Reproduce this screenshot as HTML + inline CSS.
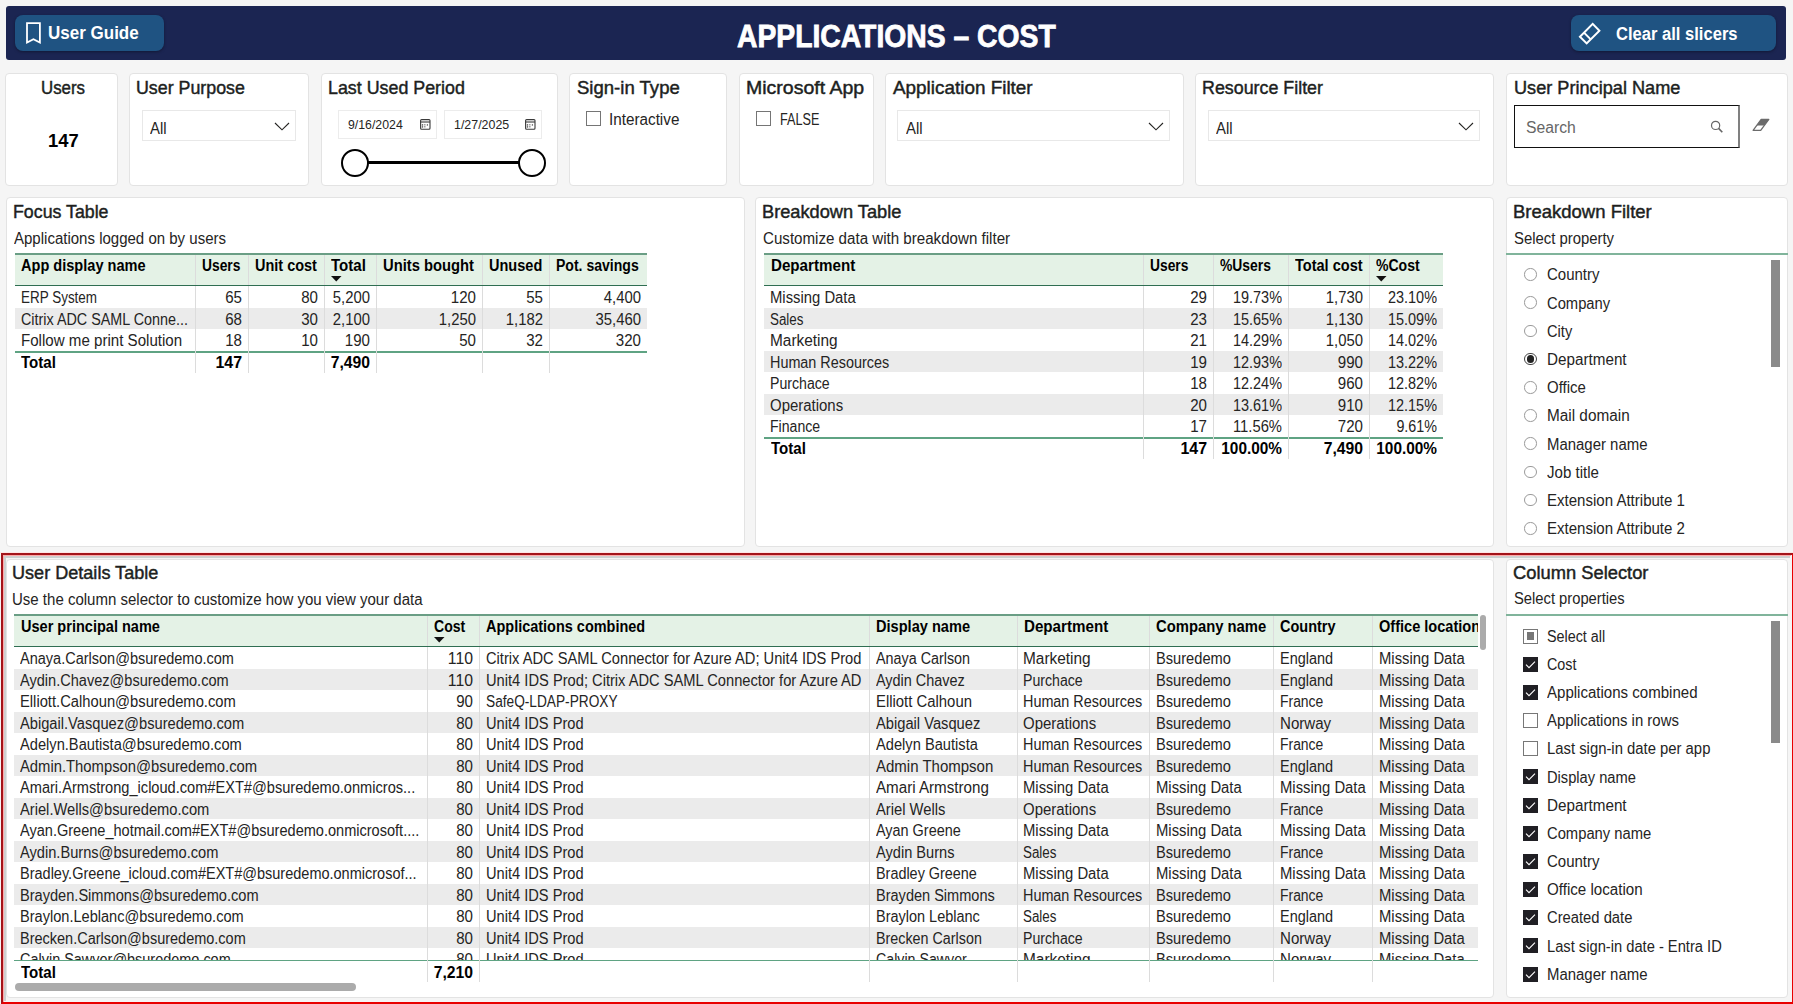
<!DOCTYPE html><html><head><meta charset="utf-8"><style>
html,body{margin:0;padding:0;}
body{width:1793px;height:1004px;position:relative;overflow:hidden;background:#f5f5f5;font-family:"Liberation Sans",sans-serif;}
.t{position:absolute;white-space:nowrap;}
</style></head><body>
<div style="position:absolute;left:6px;top:6px;width:1780px;height:54px;background:#1b2552;border-radius:3px;"></div>
<div style="position:absolute;left:15px;top:15px;width:149px;height:36px;background:#1f5382;border-radius:8px;box-shadow:0 1px 3px rgba(0,0,0,.35);"></div>
<div style="position:absolute;left:1571px;top:15px;width:205px;height:36px;background:#1f5382;border-radius:8px;box-shadow:0 1px 3px rgba(0,0,0,.35);"></div>
<svg style="position:absolute;left:24px;top:21px" width="20" height="25" viewBox="0 0 20 25"><path d="M3 2.2 H15.9 V21.6 L9.45 18.3 L3 21.6 Z" fill="none" stroke="#fff" stroke-width="1.8" stroke-linejoin="miter"/></svg>
<div class="t" style="left:47.99px;transform-origin:0 0;top:23.80px;font-size:18.67px;line-height:18.67px;font-weight:700;color:#fff;transform:scaleX(0.9112);">User Guide</div>
<div class="t" style="left:736.80px;transform-origin:0 0;top:20.98px;font-size:30.5px;line-height:30.5px;font-weight:700;color:#fff;transform:scaleX(0.9279);-webkit-text-stroke:0.8px #fff;">APPLICATIONS – COST</div>
<svg style="position:absolute;left:1576px;top:20px" width="27" height="27" viewBox="0 0 27 27"><g transform="rotate(-45 13.5 13.5)"><rect x="4.5" y="9" width="18" height="9.5" fill="none" stroke="#fff" stroke-width="2"/><line x1="10.2" y1="9" x2="10.2" y2="18.5" stroke="#fff" stroke-width="2"/></g></svg>
<div class="t" style="left:1616.23px;transform-origin:0 0;top:24.90px;font-size:18.67px;line-height:18.67px;font-weight:700;color:#fff;transform:scaleX(0.8878);">Clear all slicers</div>
<div style="position:absolute;left:5px;top:73px;width:113px;height:113px;background:#fff;border:1px solid #e3e3e3;box-sizing:border-box;border-radius:4px;"></div>
<div style="position:absolute;left:129px;top:73px;width:180px;height:113px;background:#fff;border:1px solid #e3e3e3;box-sizing:border-box;border-radius:4px;"></div>
<div style="position:absolute;left:321px;top:73px;width:237px;height:113px;background:#fff;border:1px solid #e3e3e3;box-sizing:border-box;border-radius:4px;"></div>
<div style="position:absolute;left:569px;top:73px;width:158px;height:113px;background:#fff;border:1px solid #e3e3e3;box-sizing:border-box;border-radius:4px;"></div>
<div style="position:absolute;left:739px;top:73px;width:135px;height:113px;background:#fff;border:1px solid #e3e3e3;box-sizing:border-box;border-radius:4px;"></div>
<div style="position:absolute;left:885px;top:73px;width:299px;height:113px;background:#fff;border:1px solid #e3e3e3;box-sizing:border-box;border-radius:4px;"></div>
<div style="position:absolute;left:1195px;top:73px;width:299px;height:113px;background:#fff;border:1px solid #e3e3e3;box-sizing:border-box;border-radius:4px;"></div>
<div style="position:absolute;left:1506px;top:73px;width:282px;height:113px;background:#fff;border:1px solid #e3e3e3;box-sizing:border-box;border-radius:4px;"></div>
<div class="t" style="left:41.17px;transform-origin:0 0;top:78.90px;font-size:18.67px;line-height:18.67px;font-weight:400;color:#201f1e;transform:scaleX(0.9043);-webkit-text-stroke:0.45px #201f1e;">Users</div>
<div class="t" style="left:47.72px;transform-origin:0 0;top:131.70px;font-size:18.67px;line-height:18.67px;font-weight:700;color:#000;transform:scaleX(0.9831);">147</div>
<div class="t" style="left:136.31px;transform-origin:0 0;top:79.00px;font-size:18.67px;line-height:18.67px;font-weight:400;color:#201f1e;transform:scaleX(0.9550);-webkit-text-stroke:0.45px #201f1e;">User Purpose</div>
<div class="t" style="left:328.37px;transform-origin:0 0;top:79.00px;font-size:18.67px;line-height:18.67px;font-weight:400;color:#201f1e;transform:scaleX(0.9559);-webkit-text-stroke:0.45px #201f1e;">Last Used Period</div>
<div class="t" style="left:576.75px;transform-origin:0 0;top:79.00px;font-size:18.67px;line-height:18.67px;font-weight:400;color:#201f1e;transform:scaleX(0.9941);-webkit-text-stroke:0.45px #201f1e;">Sign-in Type</div>
<div class="t" style="left:746.13px;transform-origin:0 0;top:79.00px;font-size:18.67px;line-height:18.67px;font-weight:400;color:#201f1e;transform:scaleX(1.0450);-webkit-text-stroke:0.45px #201f1e;">Microsoft App</div>
<div class="t" style="left:893.00px;transform-origin:0 0;top:79.00px;font-size:18.67px;line-height:18.67px;font-weight:400;color:#201f1e;transform:scaleX(1.0127);-webkit-text-stroke:0.45px #201f1e;">Application Filter</div>
<div class="t" style="left:1202.27px;transform-origin:0 0;top:79.00px;font-size:18.67px;line-height:18.67px;font-weight:400;color:#201f1e;transform:scaleX(0.9563);-webkit-text-stroke:0.45px #201f1e;">Resource Filter</div>
<div class="t" style="left:1513.58px;transform-origin:0 0;top:79.00px;font-size:18.67px;line-height:18.67px;font-weight:400;color:#201f1e;transform:scaleX(0.9725);-webkit-text-stroke:0.45px #201f1e;">User Principal Name</div>
<div style="position:absolute;left:142px;top:110px;width:154px;height:31px;border:1px solid #e8e8e8;box-sizing:border-box;background:#fff;"></div>
<div class="t" style="left:150.00px;transform-origin:0 0;top:120.66px;font-size:16px;line-height:16px;font-weight:400;color:#252423;transform:scaleX(0.9313);">All</div>
<svg style="position:absolute;left:274px;top:119px" width="16" height="12" viewBox="0 0 16 12"><path d="M1 4 L8 10.8 L15 4" fill="none" stroke="#252423" stroke-width="1.15"/></svg>
<div style="position:absolute;left:897px;top:110px;width:273px;height:31px;border:1px solid #e8e8e8;box-sizing:border-box;background:#fff;"></div>
<div class="t" style="left:905.50px;transform-origin:0 0;top:120.66px;font-size:16px;line-height:16px;font-weight:400;color:#252423;transform:scaleX(0.9313);">All</div>
<svg style="position:absolute;left:1148px;top:119px" width="16" height="12" viewBox="0 0 16 12"><path d="M1 4 L8 10.8 L15 4" fill="none" stroke="#252423" stroke-width="1.15"/></svg>
<div style="position:absolute;left:1208px;top:110px;width:272px;height:31px;border:1px solid #e8e8e8;box-sizing:border-box;background:#fff;"></div>
<div class="t" style="left:1215.80px;transform-origin:0 0;top:120.66px;font-size:16px;line-height:16px;font-weight:400;color:#252423;transform:scaleX(0.9313);">All</div>
<svg style="position:absolute;left:1458px;top:119px" width="16" height="12" viewBox="0 0 16 12"><path d="M1 4 L8 10.8 L15 4" fill="none" stroke="#252423" stroke-width="1.15"/></svg>
<div style="position:absolute;left:338px;top:110px;width:99px;height:29px;border:1px solid #ececec;box-sizing:border-box;background:#fff;"></div>
<div class="t" style="left:347.94px;transform-origin:0 0;top:118.42px;font-size:13.33px;line-height:13.33px;font-weight:400;color:#252423;transform:scaleX(0.9231);">9/16/2024</div>
<svg style="position:absolute;left:419.6px;top:118.5px" width="11" height="11" viewBox="0 0 11 11"><rect x="0.6" y="0.6" width="9.4" height="9.6" rx="1" fill="none" stroke="#3a3a3a" stroke-width="1.1"/><line x1="0.6" y1="3" x2="10" y2="3" stroke="#3a3a3a" stroke-width="1.1"/><circle cx="2.4" cy="5.9" r="0.7" fill="#222"/><rect x="3.8" y="5.4" width="1.8" height="0.9" fill="#666"/><circle cx="7.4" cy="5.9" r="0.7" fill="#333"/><circle cx="2.4" cy="7.9" r="0.7" fill="#222"/><rect x="3.8" y="7.4" width="1.8" height="0.9" fill="#666"/></svg>
<div style="position:absolute;left:444px;top:110px;width:98px;height:29px;border:1px solid #ececec;box-sizing:border-box;background:#fff;"></div>
<div class="t" style="left:453.57px;transform-origin:0 0;top:118.42px;font-size:13.33px;line-height:13.33px;font-weight:400;color:#252423;transform:scaleX(0.9310);">1/27/2025</div>
<svg style="position:absolute;left:524.5px;top:118.5px" width="11" height="11" viewBox="0 0 11 11"><rect x="0.6" y="0.6" width="9.4" height="9.6" rx="1" fill="none" stroke="#3a3a3a" stroke-width="1.1"/><line x1="0.6" y1="3" x2="10" y2="3" stroke="#3a3a3a" stroke-width="1.1"/><circle cx="2.4" cy="5.9" r="0.7" fill="#222"/><rect x="3.8" y="5.4" width="1.8" height="0.9" fill="#666"/><circle cx="7.4" cy="5.9" r="0.7" fill="#333"/><circle cx="2.4" cy="7.9" r="0.7" fill="#222"/><rect x="3.8" y="7.4" width="1.8" height="0.9" fill="#666"/></svg>
<div style="position:absolute;left:368px;top:161px;width:151px;height:3px;background:#000;"></div>
<div style="position:absolute;left:341.3px;top:148.8px;width:28.2px;height:28.2px;border:2.7px solid #000;box-sizing:border-box;border-radius:50%;background:#fff"></div>
<div style="position:absolute;left:518px;top:148.8px;width:28.2px;height:28.2px;border:2.7px solid #000;box-sizing:border-box;border-radius:50%;background:#fff"></div>
<div style="position:absolute;left:586px;top:111px;width:15px;height:15px;border:1px solid #757575;box-sizing:border-box;"></div>
<div class="t" style="left:608.57px;transform-origin:0 0;top:112.16px;font-size:16px;line-height:16px;font-weight:400;color:#252423;transform:scaleX(0.9533);">Interactive</div>
<div style="position:absolute;left:756px;top:111px;width:15px;height:15px;border:1px solid #757575;box-sizing:border-box;"></div>
<div class="t" style="left:779.61px;transform-origin:0 0;top:112.16px;font-size:16px;line-height:16px;font-weight:400;color:#252423;transform:scaleX(0.7896);">FALSE</div>
<div style="position:absolute;left:1514px;top:105px;width:226px;height:43px;border:1.2px solid #111;border-right:2px solid #808080;box-sizing:border-box;background:#fff;"></div>
<div class="t" style="left:1525.96px;transform-origin:0 0;top:119.76px;font-size:16px;line-height:16px;font-weight:400;color:#666;transform:scaleX(0.9837);">Search</div>
<svg style="position:absolute;left:1700px;top:110px" width="80" height="30" viewBox="1700 110 80 30"><circle cx="1715.6" cy="125.4" r="4.1" fill="none" stroke="#666" stroke-width="1.2"/><line x1="1718.6" y1="128.4" x2="1722.3" y2="132.3" stroke="#666" stroke-width="1.6"/><path d="M1761.2 119.4 L1768.8 119.4 L1764.2 125.6 L1756.6 125.6 Z" fill="#6b6b6b"/><path d="M1761.2 119.4 L1768.8 119.4 L1760.7 130.3 L1753.1 130.3 Z" fill="none" stroke="#6b6b6b" stroke-width="1.3" stroke-linejoin="round"/></svg>
<div style="position:absolute;left:6px;top:197px;width:739px;height:350px;background:#fff;border:1px solid #e3e3e3;box-sizing:border-box;border-radius:4px;"></div>
<div style="position:absolute;left:755px;top:197px;width:739px;height:350px;background:#fff;border:1px solid #e3e3e3;box-sizing:border-box;border-radius:4px;"></div>
<div style="position:absolute;left:1506px;top:197px;width:282px;height:350px;background:#fff;border:1px solid #e3e3e3;box-sizing:border-box;border-radius:4px;"></div>
<div class="t" style="left:12.97px;transform-origin:0 0;top:202.70px;font-size:18.67px;line-height:18.67px;font-weight:400;color:#201f1e;transform:scaleX(0.9527);-webkit-text-stroke:0.45px #201f1e;">Focus Table</div>
<div class="t" style="left:14.40px;transform-origin:0 0;top:231.16px;font-size:16px;line-height:16px;font-weight:400;color:#252423;transform:scaleX(0.9384);">Applications logged on by users</div>
<div class="t" style="left:762.44px;transform-origin:0 0;top:202.70px;font-size:18.67px;line-height:18.67px;font-weight:400;color:#201f1e;transform:scaleX(0.9762);-webkit-text-stroke:0.45px #201f1e;">Breakdown Table</div>
<div class="t" style="left:762.69px;transform-origin:0 0;top:231.16px;font-size:16px;line-height:16px;font-weight:400;color:#252423;transform:scaleX(0.9450);">Customize data with breakdown filter</div>
<div class="t" style="left:1512.81px;transform-origin:0 0;top:202.90px;font-size:18.67px;line-height:18.67px;font-weight:400;color:#201f1e;transform:scaleX(0.9910);-webkit-text-stroke:0.45px #201f1e;">Breakdown Filter</div>
<div class="t" style="left:1514.30px;transform-origin:0 0;top:230.76px;font-size:16px;line-height:16px;font-weight:400;color:#252423;transform:scaleX(0.9297);">Select property</div>
<div style="position:absolute;left:14.5px;top:253px;width:632.5px;height:33px;background:#e4f2e6;"></div>
<div style="position:absolute;left:14.5px;top:253px;width:632.5px;height:2px;background:#6a9e85;"></div>
<div style="position:absolute;left:14.5px;top:307.5px;width:632.5px;height:21.5px;background:#ebebeb"></div>
<div class="t" style="left:20.50px;transform-origin:0 0;top:290.16px;font-size:16px;line-height:16px;font-weight:400;color:#252423;transform:scaleX(0.8412);">ERP System</div>
<div class="t" style="left:-958.50px;width:1200px;text-align:right;transform-origin:100% 0;top:290.16px;font-size:16px;line-height:16px;font-weight:400;color:#252423;transform:scaleX(0.9422);">65</div>
<div class="t" style="left:-882.50px;width:1200px;text-align:right;transform-origin:100% 0;top:290.16px;font-size:16px;line-height:16px;font-weight:400;color:#252423;transform:scaleX(0.9422);">80</div>
<div class="t" style="left:-830.00px;width:1200px;text-align:right;transform-origin:100% 0;top:290.16px;font-size:16px;line-height:16px;font-weight:400;color:#252423;transform:scaleX(0.9288);">5,200</div>
<div class="t" style="left:-724.00px;width:1200px;text-align:right;transform-origin:100% 0;top:290.16px;font-size:16px;line-height:16px;font-weight:400;color:#252423;transform:scaleX(0.9422);">120</div>
<div class="t" style="left:-657.00px;width:1200px;text-align:right;transform-origin:100% 0;top:290.16px;font-size:16px;line-height:16px;font-weight:400;color:#252423;transform:scaleX(0.9422);">55</div>
<div class="t" style="left:-559.50px;width:1200px;text-align:right;transform-origin:100% 0;top:290.16px;font-size:16px;line-height:16px;font-weight:400;color:#252423;transform:scaleX(0.9288);">4,400</div>
<div class="t" style="left:20.50px;transform-origin:0 0;top:311.66px;font-size:16px;line-height:16px;font-weight:400;color:#252423;transform:scaleX(0.8971);">Citrix ADC SAML Conne...</div>
<div class="t" style="left:-958.50px;width:1200px;text-align:right;transform-origin:100% 0;top:311.66px;font-size:16px;line-height:16px;font-weight:400;color:#252423;transform:scaleX(0.9422);">68</div>
<div class="t" style="left:-882.50px;width:1200px;text-align:right;transform-origin:100% 0;top:311.66px;font-size:16px;line-height:16px;font-weight:400;color:#252423;transform:scaleX(0.9422);">30</div>
<div class="t" style="left:-830.00px;width:1200px;text-align:right;transform-origin:100% 0;top:311.66px;font-size:16px;line-height:16px;font-weight:400;color:#252423;transform:scaleX(0.9288);">2,100</div>
<div class="t" style="left:-724.00px;width:1200px;text-align:right;transform-origin:100% 0;top:311.66px;font-size:16px;line-height:16px;font-weight:400;color:#252423;transform:scaleX(0.9288);">1,250</div>
<div class="t" style="left:-657.00px;width:1200px;text-align:right;transform-origin:100% 0;top:311.66px;font-size:16px;line-height:16px;font-weight:400;color:#252423;transform:scaleX(0.9288);">1,182</div>
<div class="t" style="left:-559.50px;width:1200px;text-align:right;transform-origin:100% 0;top:311.66px;font-size:16px;line-height:16px;font-weight:400;color:#252423;transform:scaleX(0.9313);">35,460</div>
<div class="t" style="left:20.50px;transform-origin:0 0;top:333.16px;font-size:16px;line-height:16px;font-weight:400;color:#252423;transform:scaleX(0.9438);">Follow me print Solution</div>
<div class="t" style="left:-958.50px;width:1200px;text-align:right;transform-origin:100% 0;top:333.16px;font-size:16px;line-height:16px;font-weight:400;color:#252423;transform:scaleX(0.9422);">18</div>
<div class="t" style="left:-882.50px;width:1200px;text-align:right;transform-origin:100% 0;top:333.16px;font-size:16px;line-height:16px;font-weight:400;color:#252423;transform:scaleX(0.9422);">10</div>
<div class="t" style="left:-830.00px;width:1200px;text-align:right;transform-origin:100% 0;top:333.16px;font-size:16px;line-height:16px;font-weight:400;color:#252423;transform:scaleX(0.9422);">190</div>
<div class="t" style="left:-724.00px;width:1200px;text-align:right;transform-origin:100% 0;top:333.16px;font-size:16px;line-height:16px;font-weight:400;color:#252423;transform:scaleX(0.9422);">50</div>
<div class="t" style="left:-657.00px;width:1200px;text-align:right;transform-origin:100% 0;top:333.16px;font-size:16px;line-height:16px;font-weight:400;color:#252423;transform:scaleX(0.9422);">32</div>
<div class="t" style="left:-559.50px;width:1200px;text-align:right;transform-origin:100% 0;top:333.16px;font-size:16px;line-height:16px;font-weight:400;color:#252423;transform:scaleX(0.9422);">320</div>
<div style="position:absolute;left:14.5px;top:350.5px;width:632.5px;height:2.0px;background:#5fa383;"></div>
<div class="t" style="left:21.00px;transform-origin:0 0;top:354.66px;font-size:16px;line-height:16px;font-weight:700;color:#000;transform:scaleX(0.9413);">Total</div>
<div class="t" style="left:-958.50px;width:1200px;text-align:right;transform-origin:100% 0;top:354.66px;font-size:16px;line-height:16px;font-weight:700;color:#000;transform:scaleX(0.9964);">147</div>
<div class="t" style="left:-830.00px;width:1200px;text-align:right;transform-origin:100% 0;top:354.66px;font-size:16px;line-height:16px;font-weight:700;color:#000;transform:scaleX(0.9822);">7,490</div>
<div style="position:absolute;left:195.0px;top:255px;width:1px;height:117.5px;background:#dcdcdc"></div>
<div style="position:absolute;left:247.5px;top:255px;width:1px;height:117.5px;background:#dcdcdc"></div>
<div style="position:absolute;left:323.5px;top:255px;width:1px;height:117.5px;background:#dcdcdc"></div>
<div style="position:absolute;left:376.0px;top:255px;width:1px;height:117.5px;background:#dcdcdc"></div>
<div style="position:absolute;left:482.0px;top:255px;width:1px;height:117.5px;background:#dcdcdc"></div>
<div style="position:absolute;left:549.0px;top:255px;width:1px;height:117.5px;background:#dcdcdc"></div>
<div style="position:absolute;left:14.5px;top:285px;width:632.5px;height:1px;background:#2f6e52;"></div>
<div class="t" style="left:21.00px;transform-origin:0 0;top:257.66px;font-size:16px;line-height:16px;font-weight:700;color:#000;transform:scaleX(0.9095);">App display name</div>
<div class="t" style="left:202.00px;transform-origin:0 0;top:257.66px;font-size:16px;line-height:16px;font-weight:700;color:#000;transform:scaleX(0.8624);">Users</div>
<div class="t" style="left:254.50px;transform-origin:0 0;top:257.66px;font-size:16px;line-height:16px;font-weight:700;color:#000;transform:scaleX(0.9041);">Unit cost</div>
<div class="t" style="left:330.50px;transform-origin:0 0;top:257.66px;font-size:16px;line-height:16px;font-weight:700;color:#000;transform:scaleX(0.9413);">Total</div>
<div class="t" style="left:383.00px;transform-origin:0 0;top:257.66px;font-size:16px;line-height:16px;font-weight:700;color:#000;transform:scaleX(0.9225);">Units bought</div>
<div class="t" style="left:489.00px;transform-origin:0 0;top:257.66px;font-size:16px;line-height:16px;font-weight:700;color:#000;transform:scaleX(0.9075);">Unused</div>
<div class="t" style="left:556.00px;transform-origin:0 0;top:257.66px;font-size:16px;line-height:16px;font-weight:700;color:#000;transform:scaleX(0.8775);">Pot. savings</div>
<svg style="position:absolute;left:330.5px;top:276px" width="11" height="6" viewBox="0 0 11 6"><path d="M0 0 H10.5 L5.25 5.5 Z" fill="#111"/></svg>
<div style="position:absolute;left:764px;top:253px;width:679px;height:33px;background:#e4f2e6;"></div>
<div style="position:absolute;left:764px;top:253px;width:679px;height:2px;background:#6a9e85;"></div>
<div style="position:absolute;left:764px;top:307.5px;width:679px;height:21.5px;background:#ebebeb"></div>
<div style="position:absolute;left:764px;top:350.5px;width:679px;height:21.5px;background:#ebebeb"></div>
<div style="position:absolute;left:764px;top:393.5px;width:679px;height:21.5px;background:#ebebeb"></div>
<div class="t" style="left:770.00px;transform-origin:0 0;top:290.16px;font-size:16px;line-height:16px;font-weight:400;color:#252423;transform:scaleX(0.9272);">Missing Data</div>
<div class="t" style="left:7.00px;width:1200px;text-align:right;transform-origin:100% 0;top:290.16px;font-size:16px;line-height:16px;font-weight:400;color:#252423;transform:scaleX(0.9422);">29</div>
<div class="t" style="left:81.50px;width:1200px;text-align:right;transform-origin:100% 0;top:290.16px;font-size:16px;line-height:16px;font-weight:400;color:#252423;transform:scaleX(0.9029);">19.73%</div>
<div class="t" style="left:163.00px;width:1200px;text-align:right;transform-origin:100% 0;top:290.16px;font-size:16px;line-height:16px;font-weight:400;color:#252423;transform:scaleX(0.9288);">1,730</div>
<div class="t" style="left:236.50px;width:1200px;text-align:right;transform-origin:100% 0;top:290.16px;font-size:16px;line-height:16px;font-weight:400;color:#252423;transform:scaleX(0.9029);">23.10%</div>
<div class="t" style="left:770.00px;transform-origin:0 0;top:311.66px;font-size:16px;line-height:16px;font-weight:400;color:#252423;transform:scaleX(0.8367);">Sales</div>
<div class="t" style="left:7.00px;width:1200px;text-align:right;transform-origin:100% 0;top:311.66px;font-size:16px;line-height:16px;font-weight:400;color:#252423;transform:scaleX(0.9422);">23</div>
<div class="t" style="left:81.50px;width:1200px;text-align:right;transform-origin:100% 0;top:311.66px;font-size:16px;line-height:16px;font-weight:400;color:#252423;transform:scaleX(0.9029);">15.65%</div>
<div class="t" style="left:163.00px;width:1200px;text-align:right;transform-origin:100% 0;top:311.66px;font-size:16px;line-height:16px;font-weight:400;color:#252423;transform:scaleX(0.9288);">1,130</div>
<div class="t" style="left:236.50px;width:1200px;text-align:right;transform-origin:100% 0;top:311.66px;font-size:16px;line-height:16px;font-weight:400;color:#252423;transform:scaleX(0.9029);">15.09%</div>
<div class="t" style="left:770.00px;transform-origin:0 0;top:333.16px;font-size:16px;line-height:16px;font-weight:400;color:#252423;transform:scaleX(0.9633);">Marketing</div>
<div class="t" style="left:7.00px;width:1200px;text-align:right;transform-origin:100% 0;top:333.16px;font-size:16px;line-height:16px;font-weight:400;color:#252423;transform:scaleX(0.9422);">21</div>
<div class="t" style="left:81.50px;width:1200px;text-align:right;transform-origin:100% 0;top:333.16px;font-size:16px;line-height:16px;font-weight:400;color:#252423;transform:scaleX(0.9029);">14.29%</div>
<div class="t" style="left:163.00px;width:1200px;text-align:right;transform-origin:100% 0;top:333.16px;font-size:16px;line-height:16px;font-weight:400;color:#252423;transform:scaleX(0.9288);">1,050</div>
<div class="t" style="left:236.50px;width:1200px;text-align:right;transform-origin:100% 0;top:333.16px;font-size:16px;line-height:16px;font-weight:400;color:#252423;transform:scaleX(0.9029);">14.02%</div>
<div class="t" style="left:770.00px;transform-origin:0 0;top:354.66px;font-size:16px;line-height:16px;font-weight:400;color:#252423;transform:scaleX(0.8991);">Human Resources</div>
<div class="t" style="left:7.00px;width:1200px;text-align:right;transform-origin:100% 0;top:354.66px;font-size:16px;line-height:16px;font-weight:400;color:#252423;transform:scaleX(0.9422);">19</div>
<div class="t" style="left:81.50px;width:1200px;text-align:right;transform-origin:100% 0;top:354.66px;font-size:16px;line-height:16px;font-weight:400;color:#252423;transform:scaleX(0.9029);">12.93%</div>
<div class="t" style="left:163.00px;width:1200px;text-align:right;transform-origin:100% 0;top:354.66px;font-size:16px;line-height:16px;font-weight:400;color:#252423;transform:scaleX(0.9422);">990</div>
<div class="t" style="left:236.50px;width:1200px;text-align:right;transform-origin:100% 0;top:354.66px;font-size:16px;line-height:16px;font-weight:400;color:#252423;transform:scaleX(0.9029);">13.22%</div>
<div class="t" style="left:770.00px;transform-origin:0 0;top:376.16px;font-size:16px;line-height:16px;font-weight:400;color:#252423;transform:scaleX(0.8825);">Purchace</div>
<div class="t" style="left:7.00px;width:1200px;text-align:right;transform-origin:100% 0;top:376.16px;font-size:16px;line-height:16px;font-weight:400;color:#252423;transform:scaleX(0.9422);">18</div>
<div class="t" style="left:81.50px;width:1200px;text-align:right;transform-origin:100% 0;top:376.16px;font-size:16px;line-height:16px;font-weight:400;color:#252423;transform:scaleX(0.9029);">12.24%</div>
<div class="t" style="left:163.00px;width:1200px;text-align:right;transform-origin:100% 0;top:376.16px;font-size:16px;line-height:16px;font-weight:400;color:#252423;transform:scaleX(0.9422);">960</div>
<div class="t" style="left:236.50px;width:1200px;text-align:right;transform-origin:100% 0;top:376.16px;font-size:16px;line-height:16px;font-weight:400;color:#252423;transform:scaleX(0.9029);">12.82%</div>
<div class="t" style="left:770.00px;transform-origin:0 0;top:397.66px;font-size:16px;line-height:16px;font-weight:400;color:#252423;transform:scaleX(0.9347);">Operations</div>
<div class="t" style="left:7.00px;width:1200px;text-align:right;transform-origin:100% 0;top:397.66px;font-size:16px;line-height:16px;font-weight:400;color:#252423;transform:scaleX(0.9422);">20</div>
<div class="t" style="left:81.50px;width:1200px;text-align:right;transform-origin:100% 0;top:397.66px;font-size:16px;line-height:16px;font-weight:400;color:#252423;transform:scaleX(0.9029);">13.61%</div>
<div class="t" style="left:163.00px;width:1200px;text-align:right;transform-origin:100% 0;top:397.66px;font-size:16px;line-height:16px;font-weight:400;color:#252423;transform:scaleX(0.9422);">910</div>
<div class="t" style="left:236.50px;width:1200px;text-align:right;transform-origin:100% 0;top:397.66px;font-size:16px;line-height:16px;font-weight:400;color:#252423;transform:scaleX(0.9029);">12.15%</div>
<div class="t" style="left:770.00px;transform-origin:0 0;top:419.16px;font-size:16px;line-height:16px;font-weight:400;color:#252423;transform:scaleX(0.8804);">Finance</div>
<div class="t" style="left:7.00px;width:1200px;text-align:right;transform-origin:100% 0;top:419.16px;font-size:16px;line-height:16px;font-weight:400;color:#252423;transform:scaleX(0.9422);">17</div>
<div class="t" style="left:81.50px;width:1200px;text-align:right;transform-origin:100% 0;top:419.16px;font-size:16px;line-height:16px;font-weight:400;color:#252423;transform:scaleX(0.9231);">11.56%</div>
<div class="t" style="left:163.00px;width:1200px;text-align:right;transform-origin:100% 0;top:419.16px;font-size:16px;line-height:16px;font-weight:400;color:#252423;transform:scaleX(0.9422);">720</div>
<div class="t" style="left:236.50px;width:1200px;text-align:right;transform-origin:100% 0;top:419.16px;font-size:16px;line-height:16px;font-weight:400;color:#252423;transform:scaleX(0.8952);">9.61%</div>
<div style="position:absolute;left:764px;top:436.5px;width:679px;height:2.0px;background:#5fa383;"></div>
<div class="t" style="left:770.50px;transform-origin:0 0;top:440.66px;font-size:16px;line-height:16px;font-weight:700;color:#000;transform:scaleX(0.9413);">Total</div>
<div class="t" style="left:7.00px;width:1200px;text-align:right;transform-origin:100% 0;top:440.66px;font-size:16px;line-height:16px;font-weight:700;color:#000;transform:scaleX(0.9964);">147</div>
<div class="t" style="left:81.50px;width:1200px;text-align:right;transform-origin:100% 0;top:440.66px;font-size:16px;line-height:16px;font-weight:700;color:#000;transform:scaleX(0.9607);">100.00%</div>
<div class="t" style="left:163.00px;width:1200px;text-align:right;transform-origin:100% 0;top:440.66px;font-size:16px;line-height:16px;font-weight:700;color:#000;transform:scaleX(0.9822);">7,490</div>
<div class="t" style="left:236.50px;width:1200px;text-align:right;transform-origin:100% 0;top:440.66px;font-size:16px;line-height:16px;font-weight:700;color:#000;transform:scaleX(0.9607);">100.00%</div>
<div style="position:absolute;left:1143.0px;top:255px;width:1px;height:203.5px;background:#dcdcdc"></div>
<div style="position:absolute;left:1213.0px;top:255px;width:1px;height:203.5px;background:#dcdcdc"></div>
<div style="position:absolute;left:1287.5px;top:255px;width:1px;height:203.5px;background:#dcdcdc"></div>
<div style="position:absolute;left:1369.0px;top:255px;width:1px;height:203.5px;background:#dcdcdc"></div>
<div style="position:absolute;left:764px;top:285px;width:679px;height:1px;background:#2f6e52;"></div>
<div class="t" style="left:770.50px;transform-origin:0 0;top:257.66px;font-size:16px;line-height:16px;font-weight:700;color:#000;transform:scaleX(0.9468);">Department</div>
<div class="t" style="left:1150.00px;transform-origin:0 0;top:257.66px;font-size:16px;line-height:16px;font-weight:700;color:#000;transform:scaleX(0.8624);">Users</div>
<div class="t" style="left:1220.00px;transform-origin:0 0;top:257.66px;font-size:16px;line-height:16px;font-weight:700;color:#000;transform:scaleX(0.8661);">%Users</div>
<div class="t" style="left:1294.50px;transform-origin:0 0;top:257.66px;font-size:16px;line-height:16px;font-weight:700;color:#000;transform:scaleX(0.9090);">Total cost</div>
<div class="t" style="left:1376.00px;transform-origin:0 0;top:257.66px;font-size:16px;line-height:16px;font-weight:700;color:#000;transform:scaleX(0.8773);">%Cost</div>
<svg style="position:absolute;left:1376.0px;top:276px" width="11" height="6" viewBox="0 0 11 6"><path d="M0 0 H10.5 L5.25 5.5 Z" fill="#111"/></svg>
<div style="position:absolute;left:1506px;top:253px;width:282px;height:2px;background:#80b49b;"></div>
<div style="position:absolute;left:1524.3px;top:268.2px;width:12.5px;height:12.5px;border:1px solid #9a9a9a;box-sizing:border-box;border-radius:50%;background:#fff"></div>
<div class="t" style="left:1547.10px;transform-origin:0 0;top:267.46px;font-size:16px;line-height:16px;font-weight:400;color:#252423;transform:scaleX(0.9375);">Country</div>
<div style="position:absolute;left:1524.3px;top:296.4px;width:12.5px;height:12.5px;border:1px solid #9a9a9a;box-sizing:border-box;border-radius:50%;background:#fff"></div>
<div class="t" style="left:1547.10px;transform-origin:0 0;top:295.66px;font-size:16px;line-height:16px;font-weight:400;color:#252423;transform:scaleX(0.9222);">Company</div>
<div style="position:absolute;left:1524.3px;top:324.59999999999997px;width:12.5px;height:12.5px;border:1px solid #9a9a9a;box-sizing:border-box;border-radius:50%;background:#fff"></div>
<div class="t" style="left:1547.10px;transform-origin:0 0;top:323.86px;font-size:16px;line-height:16px;font-weight:400;color:#252423;transform:scaleX(0.9144);">City</div>
<div style="position:absolute;left:1524.3px;top:352.79999999999995px;width:12.5px;height:12.5px;border:1px solid #444;box-sizing:border-box;border-radius:50%;background:#fff"></div>
<div style="position:absolute;left:1526.8px;top:355.29999999999995px;width:7.5px;height:7.5px;border-radius:50%;background:#222"></div>
<div class="t" style="left:1547.10px;transform-origin:0 0;top:352.06px;font-size:16px;line-height:16px;font-weight:400;color:#252423;transform:scaleX(0.9522);">Department</div>
<div style="position:absolute;left:1524.3px;top:381.0px;width:12.5px;height:12.5px;border:1px solid #9a9a9a;box-sizing:border-box;border-radius:50%;background:#fff"></div>
<div class="t" style="left:1547.10px;transform-origin:0 0;top:380.26px;font-size:16px;line-height:16px;font-weight:400;color:#252423;transform:scaleX(0.9357);">Office</div>
<div style="position:absolute;left:1524.3px;top:409.2px;width:12.5px;height:12.5px;border:1px solid #9a9a9a;box-sizing:border-box;border-radius:50%;background:#fff"></div>
<div class="t" style="left:1547.10px;transform-origin:0 0;top:408.46px;font-size:16px;line-height:16px;font-weight:400;color:#252423;transform:scaleX(0.9583);">Mail domain</div>
<div style="position:absolute;left:1524.3px;top:437.4px;width:12.5px;height:12.5px;border:1px solid #9a9a9a;box-sizing:border-box;border-radius:50%;background:#fff"></div>
<div class="t" style="left:1547.10px;transform-origin:0 0;top:436.66px;font-size:16px;line-height:16px;font-weight:400;color:#252423;transform:scaleX(0.9334);">Manager name</div>
<div style="position:absolute;left:1524.3px;top:465.6px;width:12.5px;height:12.5px;border:1px solid #9a9a9a;box-sizing:border-box;border-radius:50%;background:#fff"></div>
<div class="t" style="left:1547.10px;transform-origin:0 0;top:464.86px;font-size:16px;line-height:16px;font-weight:400;color:#252423;transform:scaleX(0.9417);">Job title</div>
<div style="position:absolute;left:1524.3px;top:493.79999999999995px;width:12.5px;height:12.5px;border:1px solid #9a9a9a;box-sizing:border-box;border-radius:50%;background:#fff"></div>
<div class="t" style="left:1547.10px;transform-origin:0 0;top:493.06px;font-size:16px;line-height:16px;font-weight:400;color:#252423;transform:scaleX(0.9400);">Extension Attribute 1</div>
<div style="position:absolute;left:1524.3px;top:522.0px;width:12.5px;height:12.5px;border:1px solid #9a9a9a;box-sizing:border-box;border-radius:50%;background:#fff"></div>
<div class="t" style="left:1547.10px;transform-origin:0 0;top:521.26px;font-size:16px;line-height:16px;font-weight:400;color:#252423;transform:scaleX(0.9400);">Extension Attribute 2</div>
<div style="position:absolute;left:1771px;top:260px;width:9px;height:107px;background:#8a8a8a;"></div>
<div style="position:absolute;left:6px;top:559px;width:1488px;height:439px;background:#fff;border:1px solid #e3e3e3;box-sizing:border-box;border-radius:4px;"></div>
<div style="position:absolute;left:1506px;top:559px;width:282px;height:439px;background:#fff;border:1px solid #e3e3e3;box-sizing:border-box;border-radius:4px;"></div>
<div class="t" style="left:12.19px;transform-origin:0 0;top:563.90px;font-size:18.67px;line-height:18.67px;font-weight:400;color:#201f1e;transform:scaleX(0.9688);-webkit-text-stroke:0.45px #201f1e;">User Details Table</div>
<div class="t" style="left:12.23px;transform-origin:0 0;top:592.16px;font-size:16px;line-height:16px;font-weight:400;color:#252423;transform:scaleX(0.9384);">Use the column selector to customize how you view your data</div>
<div class="t" style="left:1513.02px;transform-origin:0 0;top:564.30px;font-size:18.67px;line-height:18.67px;font-weight:400;color:#201f1e;transform:scaleX(0.9821);-webkit-text-stroke:0.45px #201f1e;">Column Selector</div>
<div class="t" style="left:1514.00px;transform-origin:0 0;top:591.46px;font-size:16px;line-height:16px;font-weight:400;color:#252423;transform:scaleX(0.9217);">Select properties</div>
<div style="position:absolute;left:1506px;top:614px;width:282px;height:2px;background:#80b49b;"></div>
<div style="position:absolute;left:0;top:0;width:1478px;height:1004px;overflow:hidden">
<div style="position:absolute;left:14px;top:614px;width:1464px;height:33px;background:#e4f2e6;"></div>
<div style="position:absolute;left:14px;top:614px;width:1464px;height:2px;background:#6a9e85;"></div>
<div style="position:absolute;left:14px;top:668.5px;width:1464px;height:21.5px;background:#ebebeb"></div>
<div style="position:absolute;left:14px;top:711.5px;width:1464px;height:21.5px;background:#ebebeb"></div>
<div style="position:absolute;left:14px;top:754.5px;width:1464px;height:21.5px;background:#ebebeb"></div>
<div style="position:absolute;left:14px;top:797.5px;width:1464px;height:21.5px;background:#ebebeb"></div>
<div style="position:absolute;left:14px;top:840.5px;width:1464px;height:21.5px;background:#ebebeb"></div>
<div style="position:absolute;left:14px;top:883.5px;width:1464px;height:21.5px;background:#ebebeb"></div>
<div style="position:absolute;left:14px;top:926.5px;width:1464px;height:21.5px;background:#ebebeb"></div>
<div style="position:absolute;left:0;top:647px;width:1793px;height:313px;overflow:hidden">
<div class="t" style="left:20.00px;transform-origin:0 0;top:4.16px;font-size:16px;line-height:16px;font-weight:400;color:#252423;transform:scaleX(0.9069);">Anaya.Carlson@bsuredemo.com</div>
<div class="t" style="left:-727.00px;width:1200px;text-align:right;transform-origin:100% 0;top:4.16px;font-size:16px;line-height:16px;font-weight:400;color:#252423;transform:scaleX(0.9860);">110</div>
<div class="t" style="left:485.50px;transform-origin:0 0;top:4.16px;font-size:16px;line-height:16px;font-weight:400;color:#252423;transform:scaleX(0.9172);">Citrix ADC SAML Connector for Azure AD; Unit4 IDS Prod</div>
<div class="t" style="left:875.50px;transform-origin:0 0;top:4.16px;font-size:16px;line-height:16px;font-weight:400;color:#252423;transform:scaleX(0.8964);">Anaya Carlson</div>
<div class="t" style="left:1023.00px;transform-origin:0 0;top:4.16px;font-size:16px;line-height:16px;font-weight:400;color:#252423;transform:scaleX(0.9633);">Marketing</div>
<div class="t" style="left:1155.50px;transform-origin:0 0;top:4.16px;font-size:16px;line-height:16px;font-weight:400;color:#252423;transform:scaleX(0.9148);">Bsuredemo</div>
<div class="t" style="left:1279.50px;transform-origin:0 0;top:4.16px;font-size:16px;line-height:16px;font-weight:400;color:#252423;transform:scaleX(0.9046);">England</div>
<div class="t" style="left:1378.50px;transform-origin:0 0;top:4.16px;font-size:16px;line-height:16px;font-weight:400;color:#252423;transform:scaleX(0.9272);">Missing Data</div>
<div class="t" style="left:20.00px;transform-origin:0 0;top:25.66px;font-size:16px;line-height:16px;font-weight:400;color:#252423;transform:scaleX(0.9096);">Aydin.Chavez@bsuredemo.com</div>
<div class="t" style="left:-727.00px;width:1200px;text-align:right;transform-origin:100% 0;top:25.66px;font-size:16px;line-height:16px;font-weight:400;color:#252423;transform:scaleX(0.9860);">110</div>
<div class="t" style="left:485.50px;transform-origin:0 0;top:25.66px;font-size:16px;line-height:16px;font-weight:400;color:#252423;transform:scaleX(0.9172);">Unit4 IDS Prod; Citrix ADC SAML Connector for Azure AD</div>
<div class="t" style="left:875.50px;transform-origin:0 0;top:25.66px;font-size:16px;line-height:16px;font-weight:400;color:#252423;transform:scaleX(0.9020);">Aydin Chavez</div>
<div class="t" style="left:1023.00px;transform-origin:0 0;top:25.66px;font-size:16px;line-height:16px;font-weight:400;color:#252423;transform:scaleX(0.8825);">Purchace</div>
<div class="t" style="left:1155.50px;transform-origin:0 0;top:25.66px;font-size:16px;line-height:16px;font-weight:400;color:#252423;transform:scaleX(0.9148);">Bsuredemo</div>
<div class="t" style="left:1279.50px;transform-origin:0 0;top:25.66px;font-size:16px;line-height:16px;font-weight:400;color:#252423;transform:scaleX(0.9046);">England</div>
<div class="t" style="left:1378.50px;transform-origin:0 0;top:25.66px;font-size:16px;line-height:16px;font-weight:400;color:#252423;transform:scaleX(0.9272);">Missing Data</div>
<div class="t" style="left:20.00px;transform-origin:0 0;top:47.16px;font-size:16px;line-height:16px;font-weight:400;color:#252423;transform:scaleX(0.9218);">Elliott.Calhoun@bsuredemo.com</div>
<div class="t" style="left:-727.00px;width:1200px;text-align:right;transform-origin:100% 0;top:47.16px;font-size:16px;line-height:16px;font-weight:400;color:#252423;transform:scaleX(0.9422);">90</div>
<div class="t" style="left:485.50px;transform-origin:0 0;top:47.16px;font-size:16px;line-height:16px;font-weight:400;color:#252423;transform:scaleX(0.8553);">SafeQ-LDAP-PROXY</div>
<div class="t" style="left:875.50px;transform-origin:0 0;top:47.16px;font-size:16px;line-height:16px;font-weight:400;color:#252423;transform:scaleX(0.9300);">Elliott Calhoun</div>
<div class="t" style="left:1023.00px;transform-origin:0 0;top:47.16px;font-size:16px;line-height:16px;font-weight:400;color:#252423;transform:scaleX(0.8991);">Human Resources</div>
<div class="t" style="left:1155.50px;transform-origin:0 0;top:47.16px;font-size:16px;line-height:16px;font-weight:400;color:#252423;transform:scaleX(0.9148);">Bsuredemo</div>
<div class="t" style="left:1279.50px;transform-origin:0 0;top:47.16px;font-size:16px;line-height:16px;font-weight:400;color:#252423;transform:scaleX(0.8692);">France</div>
<div class="t" style="left:1378.50px;transform-origin:0 0;top:47.16px;font-size:16px;line-height:16px;font-weight:400;color:#252423;transform:scaleX(0.9272);">Missing Data</div>
<div class="t" style="left:20.00px;transform-origin:0 0;top:68.66px;font-size:16px;line-height:16px;font-weight:400;color:#252423;transform:scaleX(0.9167);">Abigail.Vasquez@bsuredemo.com</div>
<div class="t" style="left:-727.00px;width:1200px;text-align:right;transform-origin:100% 0;top:68.66px;font-size:16px;line-height:16px;font-weight:400;color:#252423;transform:scaleX(0.9422);">80</div>
<div class="t" style="left:485.50px;transform-origin:0 0;top:68.66px;font-size:16px;line-height:16px;font-weight:400;color:#252423;transform:scaleX(0.9144);">Unit4 IDS Prod</div>
<div class="t" style="left:875.50px;transform-origin:0 0;top:68.66px;font-size:16px;line-height:16px;font-weight:400;color:#252423;transform:scaleX(0.9182);">Abigail Vasquez</div>
<div class="t" style="left:1023.00px;transform-origin:0 0;top:68.66px;font-size:16px;line-height:16px;font-weight:400;color:#252423;transform:scaleX(0.9347);">Operations</div>
<div class="t" style="left:1155.50px;transform-origin:0 0;top:68.66px;font-size:16px;line-height:16px;font-weight:400;color:#252423;transform:scaleX(0.9148);">Bsuredemo</div>
<div class="t" style="left:1279.50px;transform-origin:0 0;top:68.66px;font-size:16px;line-height:16px;font-weight:400;color:#252423;transform:scaleX(0.9420);">Norway</div>
<div class="t" style="left:1378.50px;transform-origin:0 0;top:68.66px;font-size:16px;line-height:16px;font-weight:400;color:#252423;transform:scaleX(0.9272);">Missing Data</div>
<div class="t" style="left:20.00px;transform-origin:0 0;top:90.16px;font-size:16px;line-height:16px;font-weight:400;color:#252423;transform:scaleX(0.9158);">Adelyn.Bautista@bsuredemo.com</div>
<div class="t" style="left:-727.00px;width:1200px;text-align:right;transform-origin:100% 0;top:90.16px;font-size:16px;line-height:16px;font-weight:400;color:#252423;transform:scaleX(0.9422);">80</div>
<div class="t" style="left:485.50px;transform-origin:0 0;top:90.16px;font-size:16px;line-height:16px;font-weight:400;color:#252423;transform:scaleX(0.9144);">Unit4 IDS Prod</div>
<div class="t" style="left:875.50px;transform-origin:0 0;top:90.16px;font-size:16px;line-height:16px;font-weight:400;color:#252423;transform:scaleX(0.9163);">Adelyn Bautista</div>
<div class="t" style="left:1023.00px;transform-origin:0 0;top:90.16px;font-size:16px;line-height:16px;font-weight:400;color:#252423;transform:scaleX(0.8991);">Human Resources</div>
<div class="t" style="left:1155.50px;transform-origin:0 0;top:90.16px;font-size:16px;line-height:16px;font-weight:400;color:#252423;transform:scaleX(0.9148);">Bsuredemo</div>
<div class="t" style="left:1279.50px;transform-origin:0 0;top:90.16px;font-size:16px;line-height:16px;font-weight:400;color:#252423;transform:scaleX(0.8692);">France</div>
<div class="t" style="left:1378.50px;transform-origin:0 0;top:90.16px;font-size:16px;line-height:16px;font-weight:400;color:#252423;transform:scaleX(0.9272);">Missing Data</div>
<div class="t" style="left:20.00px;transform-origin:0 0;top:111.66px;font-size:16px;line-height:16px;font-weight:400;color:#252423;transform:scaleX(0.9251);">Admin.Thompson@bsuredemo.com</div>
<div class="t" style="left:-727.00px;width:1200px;text-align:right;transform-origin:100% 0;top:111.66px;font-size:16px;line-height:16px;font-weight:400;color:#252423;transform:scaleX(0.9422);">80</div>
<div class="t" style="left:485.50px;transform-origin:0 0;top:111.66px;font-size:16px;line-height:16px;font-weight:400;color:#252423;transform:scaleX(0.9144);">Unit4 IDS Prod</div>
<div class="t" style="left:875.50px;transform-origin:0 0;top:111.66px;font-size:16px;line-height:16px;font-weight:400;color:#252423;transform:scaleX(0.9373);">Admin Thompson</div>
<div class="t" style="left:1023.00px;transform-origin:0 0;top:111.66px;font-size:16px;line-height:16px;font-weight:400;color:#252423;transform:scaleX(0.8991);">Human Resources</div>
<div class="t" style="left:1155.50px;transform-origin:0 0;top:111.66px;font-size:16px;line-height:16px;font-weight:400;color:#252423;transform:scaleX(0.9148);">Bsuredemo</div>
<div class="t" style="left:1279.50px;transform-origin:0 0;top:111.66px;font-size:16px;line-height:16px;font-weight:400;color:#252423;transform:scaleX(0.9046);">England</div>
<div class="t" style="left:1378.50px;transform-origin:0 0;top:111.66px;font-size:16px;line-height:16px;font-weight:400;color:#252423;transform:scaleX(0.9272);">Missing Data</div>
<div class="t" style="left:20.00px;transform-origin:0 0;top:133.16px;font-size:16px;line-height:16px;font-weight:400;color:#252423;transform:scaleX(0.9121);">Amari.Armstrong_icloud.com#EXT#@bsuredemo.onmicros...</div>
<div class="t" style="left:-727.00px;width:1200px;text-align:right;transform-origin:100% 0;top:133.16px;font-size:16px;line-height:16px;font-weight:400;color:#252423;transform:scaleX(0.9422);">80</div>
<div class="t" style="left:485.50px;transform-origin:0 0;top:133.16px;font-size:16px;line-height:16px;font-weight:400;color:#252423;transform:scaleX(0.9144);">Unit4 IDS Prod</div>
<div class="t" style="left:875.50px;transform-origin:0 0;top:133.16px;font-size:16px;line-height:16px;font-weight:400;color:#252423;transform:scaleX(0.9473);">Amari Armstrong</div>
<div class="t" style="left:1023.00px;transform-origin:0 0;top:133.16px;font-size:16px;line-height:16px;font-weight:400;color:#252423;transform:scaleX(0.9272);">Missing Data</div>
<div class="t" style="left:1155.50px;transform-origin:0 0;top:133.16px;font-size:16px;line-height:16px;font-weight:400;color:#252423;transform:scaleX(0.9272);">Missing Data</div>
<div class="t" style="left:1279.50px;transform-origin:0 0;top:133.16px;font-size:16px;line-height:16px;font-weight:400;color:#252423;transform:scaleX(0.9272);">Missing Data</div>
<div class="t" style="left:1378.50px;transform-origin:0 0;top:133.16px;font-size:16px;line-height:16px;font-weight:400;color:#252423;transform:scaleX(0.9272);">Missing Data</div>
<div class="t" style="left:20.00px;transform-origin:0 0;top:154.66px;font-size:16px;line-height:16px;font-weight:400;color:#252423;transform:scaleX(0.9178);">Ariel.Wells@bsuredemo.com</div>
<div class="t" style="left:-727.00px;width:1200px;text-align:right;transform-origin:100% 0;top:154.66px;font-size:16px;line-height:16px;font-weight:400;color:#252423;transform:scaleX(0.9422);">80</div>
<div class="t" style="left:485.50px;transform-origin:0 0;top:154.66px;font-size:16px;line-height:16px;font-weight:400;color:#252423;transform:scaleX(0.9144);">Unit4 IDS Prod</div>
<div class="t" style="left:875.50px;transform-origin:0 0;top:154.66px;font-size:16px;line-height:16px;font-weight:400;color:#252423;transform:scaleX(0.9220);">Ariel Wells</div>
<div class="t" style="left:1023.00px;transform-origin:0 0;top:154.66px;font-size:16px;line-height:16px;font-weight:400;color:#252423;transform:scaleX(0.9347);">Operations</div>
<div class="t" style="left:1155.50px;transform-origin:0 0;top:154.66px;font-size:16px;line-height:16px;font-weight:400;color:#252423;transform:scaleX(0.9148);">Bsuredemo</div>
<div class="t" style="left:1279.50px;transform-origin:0 0;top:154.66px;font-size:16px;line-height:16px;font-weight:400;color:#252423;transform:scaleX(0.8692);">France</div>
<div class="t" style="left:1378.50px;transform-origin:0 0;top:154.66px;font-size:16px;line-height:16px;font-weight:400;color:#252423;transform:scaleX(0.9272);">Missing Data</div>
<div class="t" style="left:20.00px;transform-origin:0 0;top:176.16px;font-size:16px;line-height:16px;font-weight:400;color:#252423;transform:scaleX(0.9090);">Ayan.Greene_hotmail.com#EXT#@bsuredemo.onmicrosoft....</div>
<div class="t" style="left:-727.00px;width:1200px;text-align:right;transform-origin:100% 0;top:176.16px;font-size:16px;line-height:16px;font-weight:400;color:#252423;transform:scaleX(0.9422);">80</div>
<div class="t" style="left:485.50px;transform-origin:0 0;top:176.16px;font-size:16px;line-height:16px;font-weight:400;color:#252423;transform:scaleX(0.9144);">Unit4 IDS Prod</div>
<div class="t" style="left:875.50px;transform-origin:0 0;top:176.16px;font-size:16px;line-height:16px;font-weight:400;color:#252423;transform:scaleX(0.9012);">Ayan Greene</div>
<div class="t" style="left:1023.00px;transform-origin:0 0;top:176.16px;font-size:16px;line-height:16px;font-weight:400;color:#252423;transform:scaleX(0.9272);">Missing Data</div>
<div class="t" style="left:1155.50px;transform-origin:0 0;top:176.16px;font-size:16px;line-height:16px;font-weight:400;color:#252423;transform:scaleX(0.9272);">Missing Data</div>
<div class="t" style="left:1279.50px;transform-origin:0 0;top:176.16px;font-size:16px;line-height:16px;font-weight:400;color:#252423;transform:scaleX(0.9272);">Missing Data</div>
<div class="t" style="left:1378.50px;transform-origin:0 0;top:176.16px;font-size:16px;line-height:16px;font-weight:400;color:#252423;transform:scaleX(0.9272);">Missing Data</div>
<div class="t" style="left:20.00px;transform-origin:0 0;top:197.66px;font-size:16px;line-height:16px;font-weight:400;color:#252423;transform:scaleX(0.9142);">Aydin.Burns@bsuredemo.com</div>
<div class="t" style="left:-727.00px;width:1200px;text-align:right;transform-origin:100% 0;top:197.66px;font-size:16px;line-height:16px;font-weight:400;color:#252423;transform:scaleX(0.9422);">80</div>
<div class="t" style="left:485.50px;transform-origin:0 0;top:197.66px;font-size:16px;line-height:16px;font-weight:400;color:#252423;transform:scaleX(0.9144);">Unit4 IDS Prod</div>
<div class="t" style="left:875.50px;transform-origin:0 0;top:197.66px;font-size:16px;line-height:16px;font-weight:400;color:#252423;transform:scaleX(0.9124);">Aydin Burns</div>
<div class="t" style="left:1023.00px;transform-origin:0 0;top:197.66px;font-size:16px;line-height:16px;font-weight:400;color:#252423;transform:scaleX(0.8367);">Sales</div>
<div class="t" style="left:1155.50px;transform-origin:0 0;top:197.66px;font-size:16px;line-height:16px;font-weight:400;color:#252423;transform:scaleX(0.9148);">Bsuredemo</div>
<div class="t" style="left:1279.50px;transform-origin:0 0;top:197.66px;font-size:16px;line-height:16px;font-weight:400;color:#252423;transform:scaleX(0.8692);">France</div>
<div class="t" style="left:1378.50px;transform-origin:0 0;top:197.66px;font-size:16px;line-height:16px;font-weight:400;color:#252423;transform:scaleX(0.9272);">Missing Data</div>
<div class="t" style="left:20.00px;transform-origin:0 0;top:219.16px;font-size:16px;line-height:16px;font-weight:400;color:#252423;transform:scaleX(0.9065);">Bradley.Greene_icloud.com#EXT#@bsuredemo.onmicrosof...</div>
<div class="t" style="left:-727.00px;width:1200px;text-align:right;transform-origin:100% 0;top:219.16px;font-size:16px;line-height:16px;font-weight:400;color:#252423;transform:scaleX(0.9422);">80</div>
<div class="t" style="left:485.50px;transform-origin:0 0;top:219.16px;font-size:16px;line-height:16px;font-weight:400;color:#252423;transform:scaleX(0.9144);">Unit4 IDS Prod</div>
<div class="t" style="left:875.50px;transform-origin:0 0;top:219.16px;font-size:16px;line-height:16px;font-weight:400;color:#252423;transform:scaleX(0.9001);">Bradley Greene</div>
<div class="t" style="left:1023.00px;transform-origin:0 0;top:219.16px;font-size:16px;line-height:16px;font-weight:400;color:#252423;transform:scaleX(0.9272);">Missing Data</div>
<div class="t" style="left:1155.50px;transform-origin:0 0;top:219.16px;font-size:16px;line-height:16px;font-weight:400;color:#252423;transform:scaleX(0.9272);">Missing Data</div>
<div class="t" style="left:1279.50px;transform-origin:0 0;top:219.16px;font-size:16px;line-height:16px;font-weight:400;color:#252423;transform:scaleX(0.9272);">Missing Data</div>
<div class="t" style="left:1378.50px;transform-origin:0 0;top:219.16px;font-size:16px;line-height:16px;font-weight:400;color:#252423;transform:scaleX(0.9272);">Missing Data</div>
<div class="t" style="left:20.00px;transform-origin:0 0;top:240.66px;font-size:16px;line-height:16px;font-weight:400;color:#252423;transform:scaleX(0.9118);">Brayden.Simmons@bsuredemo.com</div>
<div class="t" style="left:-727.00px;width:1200px;text-align:right;transform-origin:100% 0;top:240.66px;font-size:16px;line-height:16px;font-weight:400;color:#252423;transform:scaleX(0.9422);">80</div>
<div class="t" style="left:485.50px;transform-origin:0 0;top:240.66px;font-size:16px;line-height:16px;font-weight:400;color:#252423;transform:scaleX(0.9144);">Unit4 IDS Prod</div>
<div class="t" style="left:875.50px;transform-origin:0 0;top:240.66px;font-size:16px;line-height:16px;font-weight:400;color:#252423;transform:scaleX(0.9083);">Brayden Simmons</div>
<div class="t" style="left:1023.00px;transform-origin:0 0;top:240.66px;font-size:16px;line-height:16px;font-weight:400;color:#252423;transform:scaleX(0.8991);">Human Resources</div>
<div class="t" style="left:1155.50px;transform-origin:0 0;top:240.66px;font-size:16px;line-height:16px;font-weight:400;color:#252423;transform:scaleX(0.9148);">Bsuredemo</div>
<div class="t" style="left:1279.50px;transform-origin:0 0;top:240.66px;font-size:16px;line-height:16px;font-weight:400;color:#252423;transform:scaleX(0.8692);">France</div>
<div class="t" style="left:1378.50px;transform-origin:0 0;top:240.66px;font-size:16px;line-height:16px;font-weight:400;color:#252423;transform:scaleX(0.9272);">Missing Data</div>
<div class="t" style="left:20.00px;transform-origin:0 0;top:262.16px;font-size:16px;line-height:16px;font-weight:400;color:#252423;transform:scaleX(0.9103);">Braylon.Leblanc@bsuredemo.com</div>
<div class="t" style="left:-727.00px;width:1200px;text-align:right;transform-origin:100% 0;top:262.16px;font-size:16px;line-height:16px;font-weight:400;color:#252423;transform:scaleX(0.9422);">80</div>
<div class="t" style="left:485.50px;transform-origin:0 0;top:262.16px;font-size:16px;line-height:16px;font-weight:400;color:#252423;transform:scaleX(0.9144);">Unit4 IDS Prod</div>
<div class="t" style="left:875.50px;transform-origin:0 0;top:262.16px;font-size:16px;line-height:16px;font-weight:400;color:#252423;transform:scaleX(0.9046);">Braylon Leblanc</div>
<div class="t" style="left:1023.00px;transform-origin:0 0;top:262.16px;font-size:16px;line-height:16px;font-weight:400;color:#252423;transform:scaleX(0.8367);">Sales</div>
<div class="t" style="left:1155.50px;transform-origin:0 0;top:262.16px;font-size:16px;line-height:16px;font-weight:400;color:#252423;transform:scaleX(0.9148);">Bsuredemo</div>
<div class="t" style="left:1279.50px;transform-origin:0 0;top:262.16px;font-size:16px;line-height:16px;font-weight:400;color:#252423;transform:scaleX(0.9046);">England</div>
<div class="t" style="left:1378.50px;transform-origin:0 0;top:262.16px;font-size:16px;line-height:16px;font-weight:400;color:#252423;transform:scaleX(0.9272);">Missing Data</div>
<div class="t" style="left:20.00px;transform-origin:0 0;top:283.66px;font-size:16px;line-height:16px;font-weight:400;color:#252423;transform:scaleX(0.9057);">Brecken.Carlson@bsuredemo.com</div>
<div class="t" style="left:-727.00px;width:1200px;text-align:right;transform-origin:100% 0;top:283.66px;font-size:16px;line-height:16px;font-weight:400;color:#252423;transform:scaleX(0.9422);">80</div>
<div class="t" style="left:485.50px;transform-origin:0 0;top:283.66px;font-size:16px;line-height:16px;font-weight:400;color:#252423;transform:scaleX(0.9144);">Unit4 IDS Prod</div>
<div class="t" style="left:875.50px;transform-origin:0 0;top:283.66px;font-size:16px;line-height:16px;font-weight:400;color:#252423;transform:scaleX(0.8949);">Brecken Carlson</div>
<div class="t" style="left:1023.00px;transform-origin:0 0;top:283.66px;font-size:16px;line-height:16px;font-weight:400;color:#252423;transform:scaleX(0.8825);">Purchace</div>
<div class="t" style="left:1155.50px;transform-origin:0 0;top:283.66px;font-size:16px;line-height:16px;font-weight:400;color:#252423;transform:scaleX(0.9148);">Bsuredemo</div>
<div class="t" style="left:1279.50px;transform-origin:0 0;top:283.66px;font-size:16px;line-height:16px;font-weight:400;color:#252423;transform:scaleX(0.9420);">Norway</div>
<div class="t" style="left:1378.50px;transform-origin:0 0;top:283.66px;font-size:16px;line-height:16px;font-weight:400;color:#252423;transform:scaleX(0.9272);">Missing Data</div>
<div class="t" style="left:20.00px;transform-origin:0 0;top:305.16px;font-size:16px;line-height:16px;font-weight:400;color:#252423;transform:scaleX(0.9034);">Calvin.Sawyer@bsuredemo.com</div>
<div class="t" style="left:-727.00px;width:1200px;text-align:right;transform-origin:100% 0;top:305.16px;font-size:16px;line-height:16px;font-weight:400;color:#252423;transform:scaleX(0.9422);">80</div>
<div class="t" style="left:485.50px;transform-origin:0 0;top:305.16px;font-size:16px;line-height:16px;font-weight:400;color:#252423;transform:scaleX(0.9144);">Unit4 IDS Prod</div>
<div class="t" style="left:875.50px;transform-origin:0 0;top:305.16px;font-size:16px;line-height:16px;font-weight:400;color:#252423;transform:scaleX(0.8881);">Calvin Sawyer</div>
<div class="t" style="left:1023.00px;transform-origin:0 0;top:305.16px;font-size:16px;line-height:16px;font-weight:400;color:#252423;transform:scaleX(0.9633);">Marketing</div>
<div class="t" style="left:1155.50px;transform-origin:0 0;top:305.16px;font-size:16px;line-height:16px;font-weight:400;color:#252423;transform:scaleX(0.9148);">Bsuredemo</div>
<div class="t" style="left:1279.50px;transform-origin:0 0;top:305.16px;font-size:16px;line-height:16px;font-weight:400;color:#252423;transform:scaleX(0.9420);">Norway</div>
<div class="t" style="left:1378.50px;transform-origin:0 0;top:305.16px;font-size:16px;line-height:16px;font-weight:400;color:#252423;transform:scaleX(0.9272);">Missing Data</div>
</div>
<div style="position:absolute;left:14px;top:960px;width:1464px;height:1px;background:#5fa383;"></div>
<div class="t" style="left:20.50px;transform-origin:0 0;top:964.86px;font-size:16px;line-height:16px;font-weight:700;color:#000;transform:scaleX(0.9413);">Total</div>
<div class="t" style="left:-727.00px;width:1200px;text-align:right;transform-origin:100% 0;top:964.86px;font-size:16px;line-height:16px;font-weight:700;color:#000;transform:scaleX(0.9822);">7,210</div>
<div style="position:absolute;left:427.0px;top:616px;width:1px;height:366px;background:#dcdcdc"></div>
<div style="position:absolute;left:479.0px;top:616px;width:1px;height:366px;background:#dcdcdc"></div>
<div style="position:absolute;left:869.0px;top:616px;width:1px;height:366px;background:#dcdcdc"></div>
<div style="position:absolute;left:1016.5px;top:616px;width:1px;height:366px;background:#dcdcdc"></div>
<div style="position:absolute;left:1149.0px;top:616px;width:1px;height:366px;background:#dcdcdc"></div>
<div style="position:absolute;left:1273.0px;top:616px;width:1px;height:366px;background:#dcdcdc"></div>
<div style="position:absolute;left:1372.0px;top:616px;width:1px;height:366px;background:#dcdcdc"></div>
<div style="position:absolute;left:14px;top:646px;width:1464px;height:1px;background:#2f6e52;"></div>
<div class="t" style="left:20.50px;transform-origin:0 0;top:618.66px;font-size:16px;line-height:16px;font-weight:700;color:#000;transform:scaleX(0.9083);">User principal name</div>
<div class="t" style="left:434.00px;transform-origin:0 0;top:618.66px;font-size:16px;line-height:16px;font-weight:700;color:#000;transform:scaleX(0.8772);">Cost</div>
<div class="t" style="left:486.00px;transform-origin:0 0;top:618.66px;font-size:16px;line-height:16px;font-weight:700;color:#000;transform:scaleX(0.9043);">Applications combined</div>
<div class="t" style="left:876.00px;transform-origin:0 0;top:618.66px;font-size:16px;line-height:16px;font-weight:700;color:#000;transform:scaleX(0.9111);">Display name</div>
<div class="t" style="left:1023.50px;transform-origin:0 0;top:618.66px;font-size:16px;line-height:16px;font-weight:700;color:#000;transform:scaleX(0.9468);">Department</div>
<div class="t" style="left:1156.00px;transform-origin:0 0;top:618.66px;font-size:16px;line-height:16px;font-weight:700;color:#000;transform:scaleX(0.9250);">Company name</div>
<div class="t" style="left:1280.00px;transform-origin:0 0;top:618.66px;font-size:16px;line-height:16px;font-weight:700;color:#000;transform:scaleX(0.9056);">Country</div>
<div class="t" style="left:1379.00px;transform-origin:0 0;top:618.66px;font-size:16px;line-height:16px;font-weight:700;color:#000;transform:scaleX(0.9101);">Office location</div>
<svg style="position:absolute;left:434.0px;top:637px" width="11" height="6" viewBox="0 0 11 6"><path d="M0 0 H10.5 L5.25 5.5 Z" fill="#111"/></svg>
</div>
<div style="position:absolute;left:1480px;top:615px;width:6px;height:35px;background:#ababab;border-radius:3px;"></div>
<div style="position:absolute;left:15px;top:983px;width:341px;height:8px;background:#ababab;border-radius:4px;"></div>
<div style="position:absolute;left:1523px;top:628.5px;width:15px;height:15px;border:1px solid #777;box-sizing:border-box;background:#fff"></div><div style="position:absolute;left:1526.8px;top:632.3px;width:7.4px;height:7.4px;background:#777"></div>
<div class="t" style="left:1547.40px;transform-origin:0 0;top:628.66px;font-size:16px;line-height:16px;font-weight:400;color:#252423;transform:scaleX(0.8953);">Select all</div>
<svg style="position:absolute;left:1523px;top:656.68px" width="15" height="15" viewBox="0 0 15 15"><rect width="15" height="15" fill="#201f24"/><path d="M3 7.6 L6 10.6 L12 4.6" fill="none" stroke="#fff" stroke-width="1.1"/></svg>
<div class="t" style="left:1547.40px;transform-origin:0 0;top:656.84px;font-size:16px;line-height:16px;font-weight:400;color:#252423;transform:scaleX(0.8964);">Cost</div>
<svg style="position:absolute;left:1523px;top:684.86px" width="15" height="15" viewBox="0 0 15 15"><rect width="15" height="15" fill="#201f24"/><path d="M3 7.6 L6 10.6 L12 4.6" fill="none" stroke="#fff" stroke-width="1.1"/></svg>
<div class="t" style="left:1547.40px;transform-origin:0 0;top:685.02px;font-size:16px;line-height:16px;font-weight:400;color:#252423;transform:scaleX(0.9403);">Applications combined</div>
<div style="position:absolute;left:1523px;top:713.04px;width:15px;height:15px;border:1px solid #777;box-sizing:border-box;background:#fff"></div>
<div class="t" style="left:1547.40px;transform-origin:0 0;top:713.20px;font-size:16px;line-height:16px;font-weight:400;color:#252423;transform:scaleX(0.9326);">Applications in rows</div>
<div style="position:absolute;left:1523px;top:741.22px;width:15px;height:15px;border:1px solid #777;box-sizing:border-box;background:#fff"></div>
<div class="t" style="left:1547.40px;transform-origin:0 0;top:741.38px;font-size:16px;line-height:16px;font-weight:400;color:#252423;transform:scaleX(0.9277);">Last sign-in date per app</div>
<svg style="position:absolute;left:1523px;top:769.4px" width="15" height="15" viewBox="0 0 15 15"><rect width="15" height="15" fill="#201f24"/><path d="M3 7.6 L6 10.6 L12 4.6" fill="none" stroke="#fff" stroke-width="1.1"/></svg>
<div class="t" style="left:1547.40px;transform-origin:0 0;top:769.56px;font-size:16px;line-height:16px;font-weight:400;color:#252423;transform:scaleX(0.9171);">Display name</div>
<svg style="position:absolute;left:1523px;top:797.5799999999999px" width="15" height="15" viewBox="0 0 15 15"><rect width="15" height="15" fill="#201f24"/><path d="M3 7.6 L6 10.6 L12 4.6" fill="none" stroke="#fff" stroke-width="1.1"/></svg>
<div class="t" style="left:1547.40px;transform-origin:0 0;top:797.74px;font-size:16px;line-height:16px;font-weight:400;color:#252423;transform:scaleX(0.9522);">Department</div>
<svg style="position:absolute;left:1523px;top:825.76px" width="15" height="15" viewBox="0 0 15 15"><rect width="15" height="15" fill="#201f24"/><path d="M3 7.6 L6 10.6 L12 4.6" fill="none" stroke="#fff" stroke-width="1.1"/></svg>
<div class="t" style="left:1547.40px;transform-origin:0 0;top:825.92px;font-size:16px;line-height:16px;font-weight:400;color:#252423;transform:scaleX(0.9228);">Company name</div>
<svg style="position:absolute;left:1523px;top:853.94px" width="15" height="15" viewBox="0 0 15 15"><rect width="15" height="15" fill="#201f24"/><path d="M3 7.6 L6 10.6 L12 4.6" fill="none" stroke="#fff" stroke-width="1.1"/></svg>
<div class="t" style="left:1547.40px;transform-origin:0 0;top:854.10px;font-size:16px;line-height:16px;font-weight:400;color:#252423;transform:scaleX(0.9375);">Country</div>
<svg style="position:absolute;left:1523px;top:882.12px" width="15" height="15" viewBox="0 0 15 15"><rect width="15" height="15" fill="#201f24"/><path d="M3 7.6 L6 10.6 L12 4.6" fill="none" stroke="#fff" stroke-width="1.1"/></svg>
<div class="t" style="left:1547.40px;transform-origin:0 0;top:882.28px;font-size:16px;line-height:16px;font-weight:400;color:#252423;transform:scaleX(0.9458);">Office location</div>
<svg style="position:absolute;left:1523px;top:910.3px" width="15" height="15" viewBox="0 0 15 15"><rect width="15" height="15" fill="#201f24"/><path d="M3 7.6 L6 10.6 L12 4.6" fill="none" stroke="#fff" stroke-width="1.1"/></svg>
<div class="t" style="left:1547.40px;transform-origin:0 0;top:910.46px;font-size:16px;line-height:16px;font-weight:400;color:#252423;transform:scaleX(0.9230);">Created date</div>
<svg style="position:absolute;left:1523px;top:938.48px" width="15" height="15" viewBox="0 0 15 15"><rect width="15" height="15" fill="#201f24"/><path d="M3 7.6 L6 10.6 L12 4.6" fill="none" stroke="#fff" stroke-width="1.1"/></svg>
<div class="t" style="left:1547.40px;transform-origin:0 0;top:938.64px;font-size:16px;line-height:16px;font-weight:400;color:#252423;transform:scaleX(0.9182);">Last sign-in date - Entra ID</div>
<svg style="position:absolute;left:1523px;top:966.66px" width="15" height="15" viewBox="0 0 15 15"><rect width="15" height="15" fill="#201f24"/><path d="M3 7.6 L6 10.6 L12 4.6" fill="none" stroke="#fff" stroke-width="1.1"/></svg>
<div class="t" style="left:1547.40px;transform-origin:0 0;top:966.82px;font-size:16px;line-height:16px;font-weight:400;color:#252423;transform:scaleX(0.9334);">Manager name</div>
<div style="position:absolute;left:1771px;top:621px;width:9px;height:122px;background:#8a8a8a;"></div>
<div style="position:absolute;left:0px;top:552px;width:1793px;height:1px;background:#ffe4e4;"></div>
<div style="position:absolute;left:3px;top:555px;width:1788px;height:447px;border-top:1px solid #ffa8a8;border-left:1px solid #ffa8a8;box-sizing:border-box;"></div>
<div style="position:absolute;left:4px;top:556px;width:1786px;height:445px;border-top:2px solid #cdd0d0;border-left:2px solid #cdd0d0;box-sizing:border-box;"></div>
<div style="position:absolute;left:1px;top:553px;width:1792px;height:451px;border-top:2px solid #a3141a;border-left:2px solid #a3141a;border-right:1.5px solid #e80000;border-bottom:2px solid #e80000;box-sizing:border-box;"></div>
</body></html>
